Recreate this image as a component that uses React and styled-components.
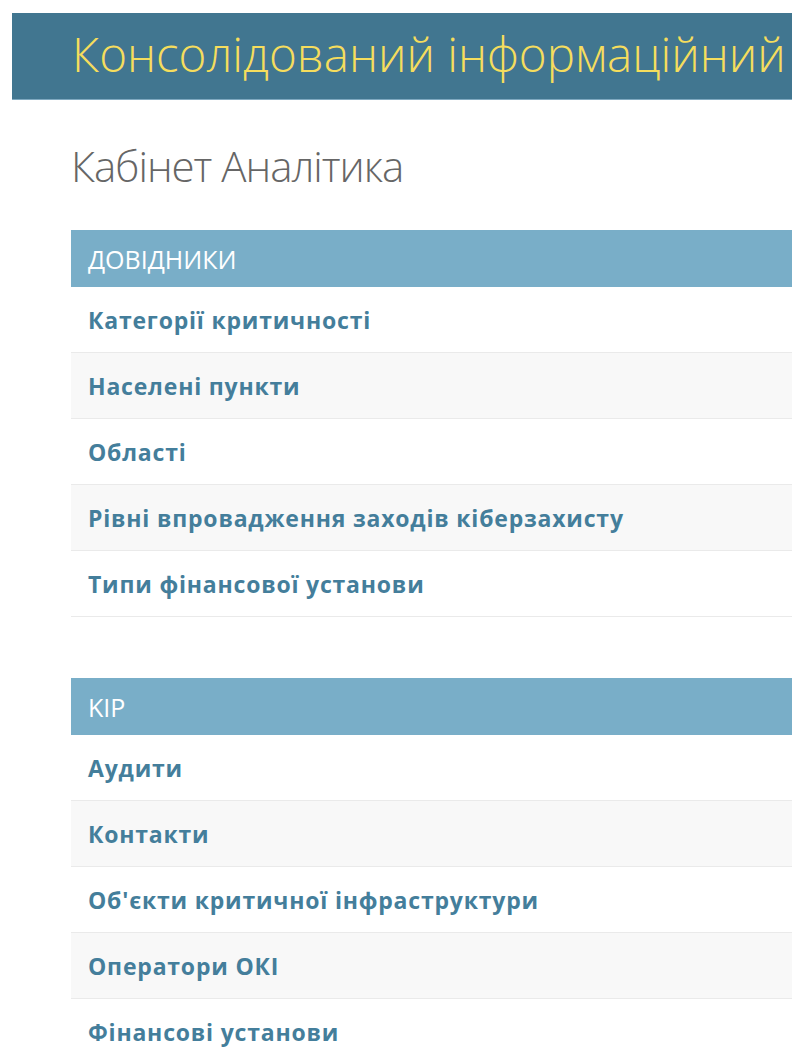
import styled, { createGlobalStyle } from 'styled-components';

const GlobalStyle = createGlobalStyle`
  html, body {
    margin: 0;
    padding: 0;
    background: #fff;
    overflow: hidden;
  }
  body {
    font-family: "Open Sans", "DejaVu Sans", sans-serif;
    color: #333;
  }
`;

const Page = styled.div`
  width: 792px;
  height: 1059px;
  overflow: hidden;
  padding-top: 13px;
  box-sizing: border-box;
`;

const Header = styled.header`
  margin-left: 12px;
  height: 87px;
  background: #417690;
  border-bottom: 1px solid #7fa9c0;
  box-sizing: border-box;
  display: flex;
  align-items: center;
  padding: 0 0 6px 60px;
  white-space: nowrap;
  overflow: hidden;
`;

const Branding = styled.h1`
  margin: 0;
  font-size: 47.5px;
  font-weight: 300;
  color: #f5dd5d;
`;

const Content = styled.main`
  padding-left: 71px;
`;

const Title = styled.h2`
  margin: 42px 0 40px;
  font-size: 42px;
  font-weight: 300;
  letter-spacing: -1px;
  color: #666;
  line-height: 48px;
`;

const Module = styled.section`
  margin-bottom: 61px;
`;

const Caption = styled.div`
  height: 57px;
  background: #79aec8;
  color: #fff;
  font-size: 25px;
  text-transform: uppercase;
  display: flex;
  align-items: center;
  padding-left: 17px;
`;

const Row = styled.div`
  height: 66px;
  box-sizing: border-box;
  border-bottom: 1px solid #eaeaea;
  background: ${(p) => (p.$alt ? '#f8f8f8' : '#fff')};
  display: flex;
  align-items: center;
  padding-left: 17px;
  font-size: 23px;
  font-weight: 700;
  letter-spacing: 0.8px;
  color: #447e9b;
  white-space: nowrap;
`;

const modules = [
  {
    name: 'Довідники',
    items: [
      'Категорії критичності',
      'Населені пункти',
      'Області',
      'Рівні впровадження заходів кіберзахисту',
      'Типи фінансової установи',
    ],
  },
  {
    name: 'KIP',
    items: [
      'Аудити',
      'Контакти',
      "Об'єкти критичної інфраструктури",
      'Оператори ОКІ',
      'Фінансові установи',
    ],
  },
];

export default function App() {
  return (
    <Page>
      <GlobalStyle />
      <Header>
        <Branding>Консолідований інформаційний</Branding>
      </Header>
      <Content>
        <Title>Кабінет Аналітика</Title>
        {modules.map((m) => (
          <Module key={m.name}>
            <Caption>{m.name}</Caption>
            {m.items.map((item, i) => (
              <Row key={item} $alt={i % 2 === 1}>
                {item}
              </Row>
            ))}
          </Module>
        ))}
      </Content>
    </Page>
  );
}
